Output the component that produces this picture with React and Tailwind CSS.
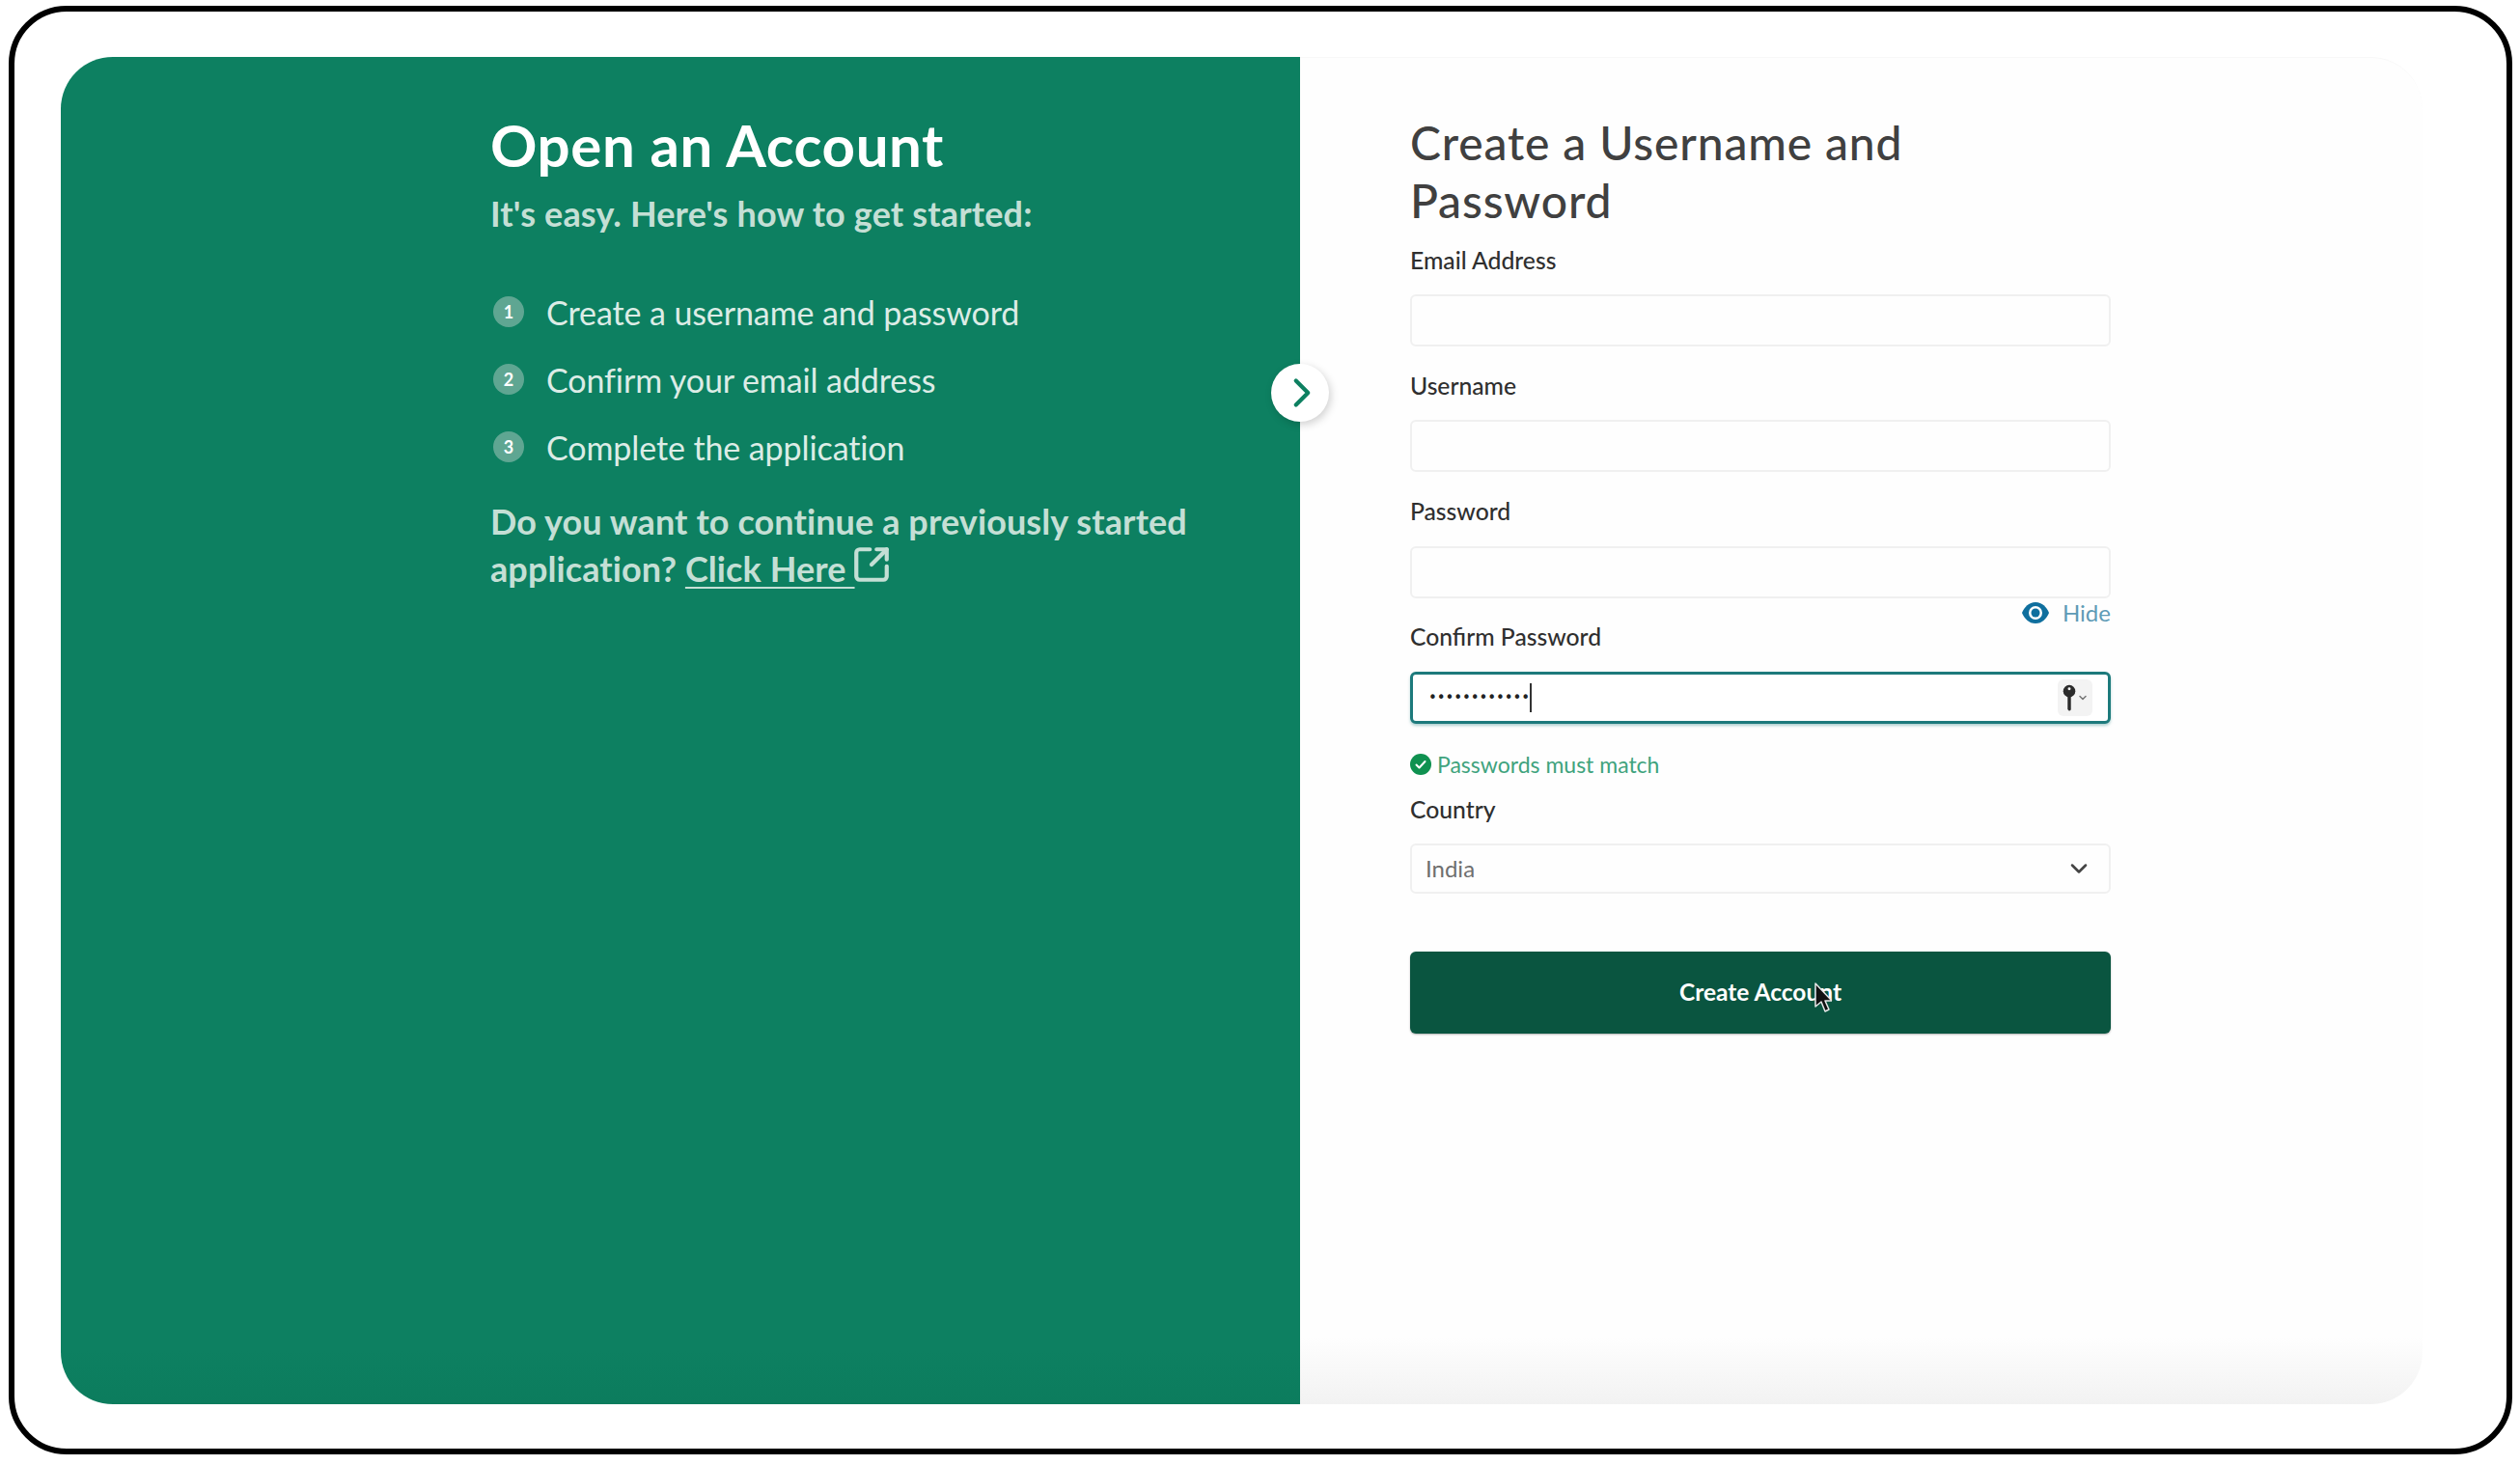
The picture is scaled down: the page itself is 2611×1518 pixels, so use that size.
import React from "react";
import { SquareArrowOutUpRight, ChevronRight, ChevronDown } from "lucide-react";

const font = "font-['Lato','Liberation_Sans',sans-serif]";

function Step({ n, children }) {
  return (
    <li className="flex items-center h-[70px]">
      <span className="w-[32px] h-[32px] ml-[3px] rounded-full bg-[#5fa692] text-white text-[18px] font-bold flex items-center justify-center">{n}</span>
      <span className="ml-[23px] text-[34px] text-[#dcecE6] tracking-[-0.1px]">{children}</span>
    </li>
  );
}

function Label({ children, className = "" }) {
  return <label className={`block h-[32px] leading-[31px] text-[24.7px] font-medium text-[#2f2f2f] ${className}`}>{children}</label>;
}

function Input({ className = "" }) {
  return <div className={`h-[54px] rounded-[6px] border-2 border-[#f0f0f0] bg-[#fefefe] ${className}`} />;
}

export default function App() {
  return (
    <div className={`w-[2611px] h-[1518px] bg-white overflow-hidden pt-[6px] pl-[9px] ${font}`}>
      <div className="w-[2594px] h-[1501px] rounded-[60px] border-[6px] border-black bg-white pt-[47px] pl-[48px]">
        <div className="relative flex w-[2447px] h-[1396px]">
          <section className="w-[1284px] h-full rounded-l-[54px] bg-[linear-gradient(180deg,#0d8061_0%,#0d8061_96%,#0c7c5d_100%)] pl-[445px]">
            <h1 className="pt-[58px] h-[124px] leading-[66px] text-[60px] font-bold text-white tracking-[0.6px]">Open an Account</h1>
            <p className="mt-[18px] h-[40px] leading-[40px] text-[36px] font-bold text-[#c4dfd5] tracking-[0.15px]">It's easy. Here's how to get started:</p>
            <ol className="mt-[47px]">
              <Step n="1">Create a username and password</Step>
              <Step n="2">Confirm your email address</Step>
              <Step n="3">Complete the application</Step>
            </ol>
            <p className="mt-[18px] w-[780px] text-[36px] leading-[48px] font-bold text-[#c4dfd5] tracking-[0.1px]">
              Do you want to continue a previously started application?{" "}
              <a className="underline underline-offset-[5px] decoration-[2px]">Click Here <SquareArrowOutUpRight className="inline-block w-[42px] h-[42px] align-[-3px] ml-[-4px]" strokeWidth={2.4} /></a>
            </p>
          </section>
          <section className="flex-1 h-full rounded-r-[54px] border-t border-[#f8f8f8] bg-[linear-gradient(180deg,#fefefe_0%,#fefefe_95%,#f2f2f2_100%)] pl-[114px]">
            <div className="w-[726px]">
              <h2 className="pt-[58px] text-[48px] leading-[60px] font-medium text-[#404040] tracking-[0.85px]">Create a Username and<br />Password</h2>
              <Label className="mt-[16px]">Email Address</Label>
              <Input className="mt-[19px]" />
              <Label className="mt-[25px]">Username</Label>
              <Input className="mt-[19px]" />
              <Label className="mt-[25px]">Password</Label>
              <Input className="mt-[20px]" />
              <div className="mt-[3px] h-[24px] flex items-center justify-end gap-[14px]">
                <svg width="28" height="22" viewBox="0 0 28 22" fill="none">
                  <path d="M14 0C7 0 2.500 5 0 11c2.500 6 7 11 14 11s11.500-5 14-11C25.500 5 21 0 14 0z" fill="#0f6f9e" />
                  <circle cx="14" cy="11" r="7" fill="#fff" />
                  <circle cx="14" cy="11" r="4.500" fill="#0f6f9e" />
                </svg>
                <span className="text-[24px] text-[#5e9bb6]">Hide</span>
              </div>
              <label className="block h-[26px] leading-[25px] text-[24.7px] font-medium text-[#2f2f2f]">Confirm Password</label>
              <div className="mt-[23px] h-[54px] rounded-[6px] border-[3px] border-[#1d7a7c] bg-white shadow-[0_2px_3px_rgba(29,122,124,0.35)] flex items-center pl-[16px] pr-[14px]">
                <span className="text-[15px] leading-none tracking-[-0.1px] text-[#222] font-['DejaVu_Sans',sans-serif]">••••••••••••</span>
                <span className="w-[2px] h-[30px] bg-[#333]" />
                <span className="ml-auto mr-[2px] w-[36px] h-[38px] rounded-[6px] bg-[#f3f3f3] flex items-center justify-center">
                  <svg width="16" height="28" viewBox="0 0 14 24" fill="none">
                    <circle cx="7" cy="6" r="5.500" fill="#2b2b2b" />
                    <circle cx="7" cy="4" r="1.300" fill="#f3f3f3" />
                    <path d="M5.500 10h3v13l-1.500 1-1.500-1.500V10z" fill="#2b2b2b" />
                  </svg>
                  <ChevronDown className="w-[12px] h-[12px] text-[#777]" strokeWidth={3} />
                </span>
              </div>
              <div className="mt-[27px] h-[30px] flex items-center gap-[6px]">
                <svg width="22" height="22" viewBox="0 0 22 22">
                  <circle cx="11" cy="11" r="11" fill="#0f9150" />
                  <path d="M6.500 11.500l3 3 6-6.500" fill="none" stroke="#fff" strokeWidth="2" strokeLinecap="round" strokeLinejoin="round" />
                </svg>
                <span className="text-[23px] text-[#3fa37d]">Passwords must match</span>
              </div>
              <Label className="mt-[16px]">Country</Label>
              <div className="mt-[19px] h-[52px] rounded-[6px] border-2 border-[#f0f0f0] bg-[#fefefe] flex items-center justify-between pl-[14px] pr-[17px]">
                <span className="text-[24px] text-[#6f6f6f]">India</span>
                <ChevronDown className="w-[28px] h-[28px] text-[#444]" strokeWidth={2.2} />
              </div>
              <button className="relative mt-[60px] w-full h-[85px] rounded-[6px] bg-[#0a5540] shadow-[0_1px_2px_rgba(0,0,0,0.3)] text-white text-[24.5px] font-bold flex items-center justify-center">
                Create Account
                <svg className="absolute left-[419px] top-[32px]" width="18" height="32" viewBox="0 0 18 32">
                  <path d="M1 1v24l6-5 4 10 4-2-4-9h7z" fill="#111" stroke="#e8e8e8" strokeWidth="1.500" strokeLinejoin="round" />
                </svg>
              </button>
            </div>
          </section>
          <div className="absolute left-[1254px] top-[318px] w-[60px] h-[60px] rounded-full bg-white shadow-[2px_3px_8px_rgba(0,0,0,0.18)] flex items-center justify-center">
            <ChevronRight className="w-[50px] h-[50px] ml-[3px] text-[#0d8061]" strokeWidth={2} />
          </div>
        </div>
      </div>
    </div>
  );
}
